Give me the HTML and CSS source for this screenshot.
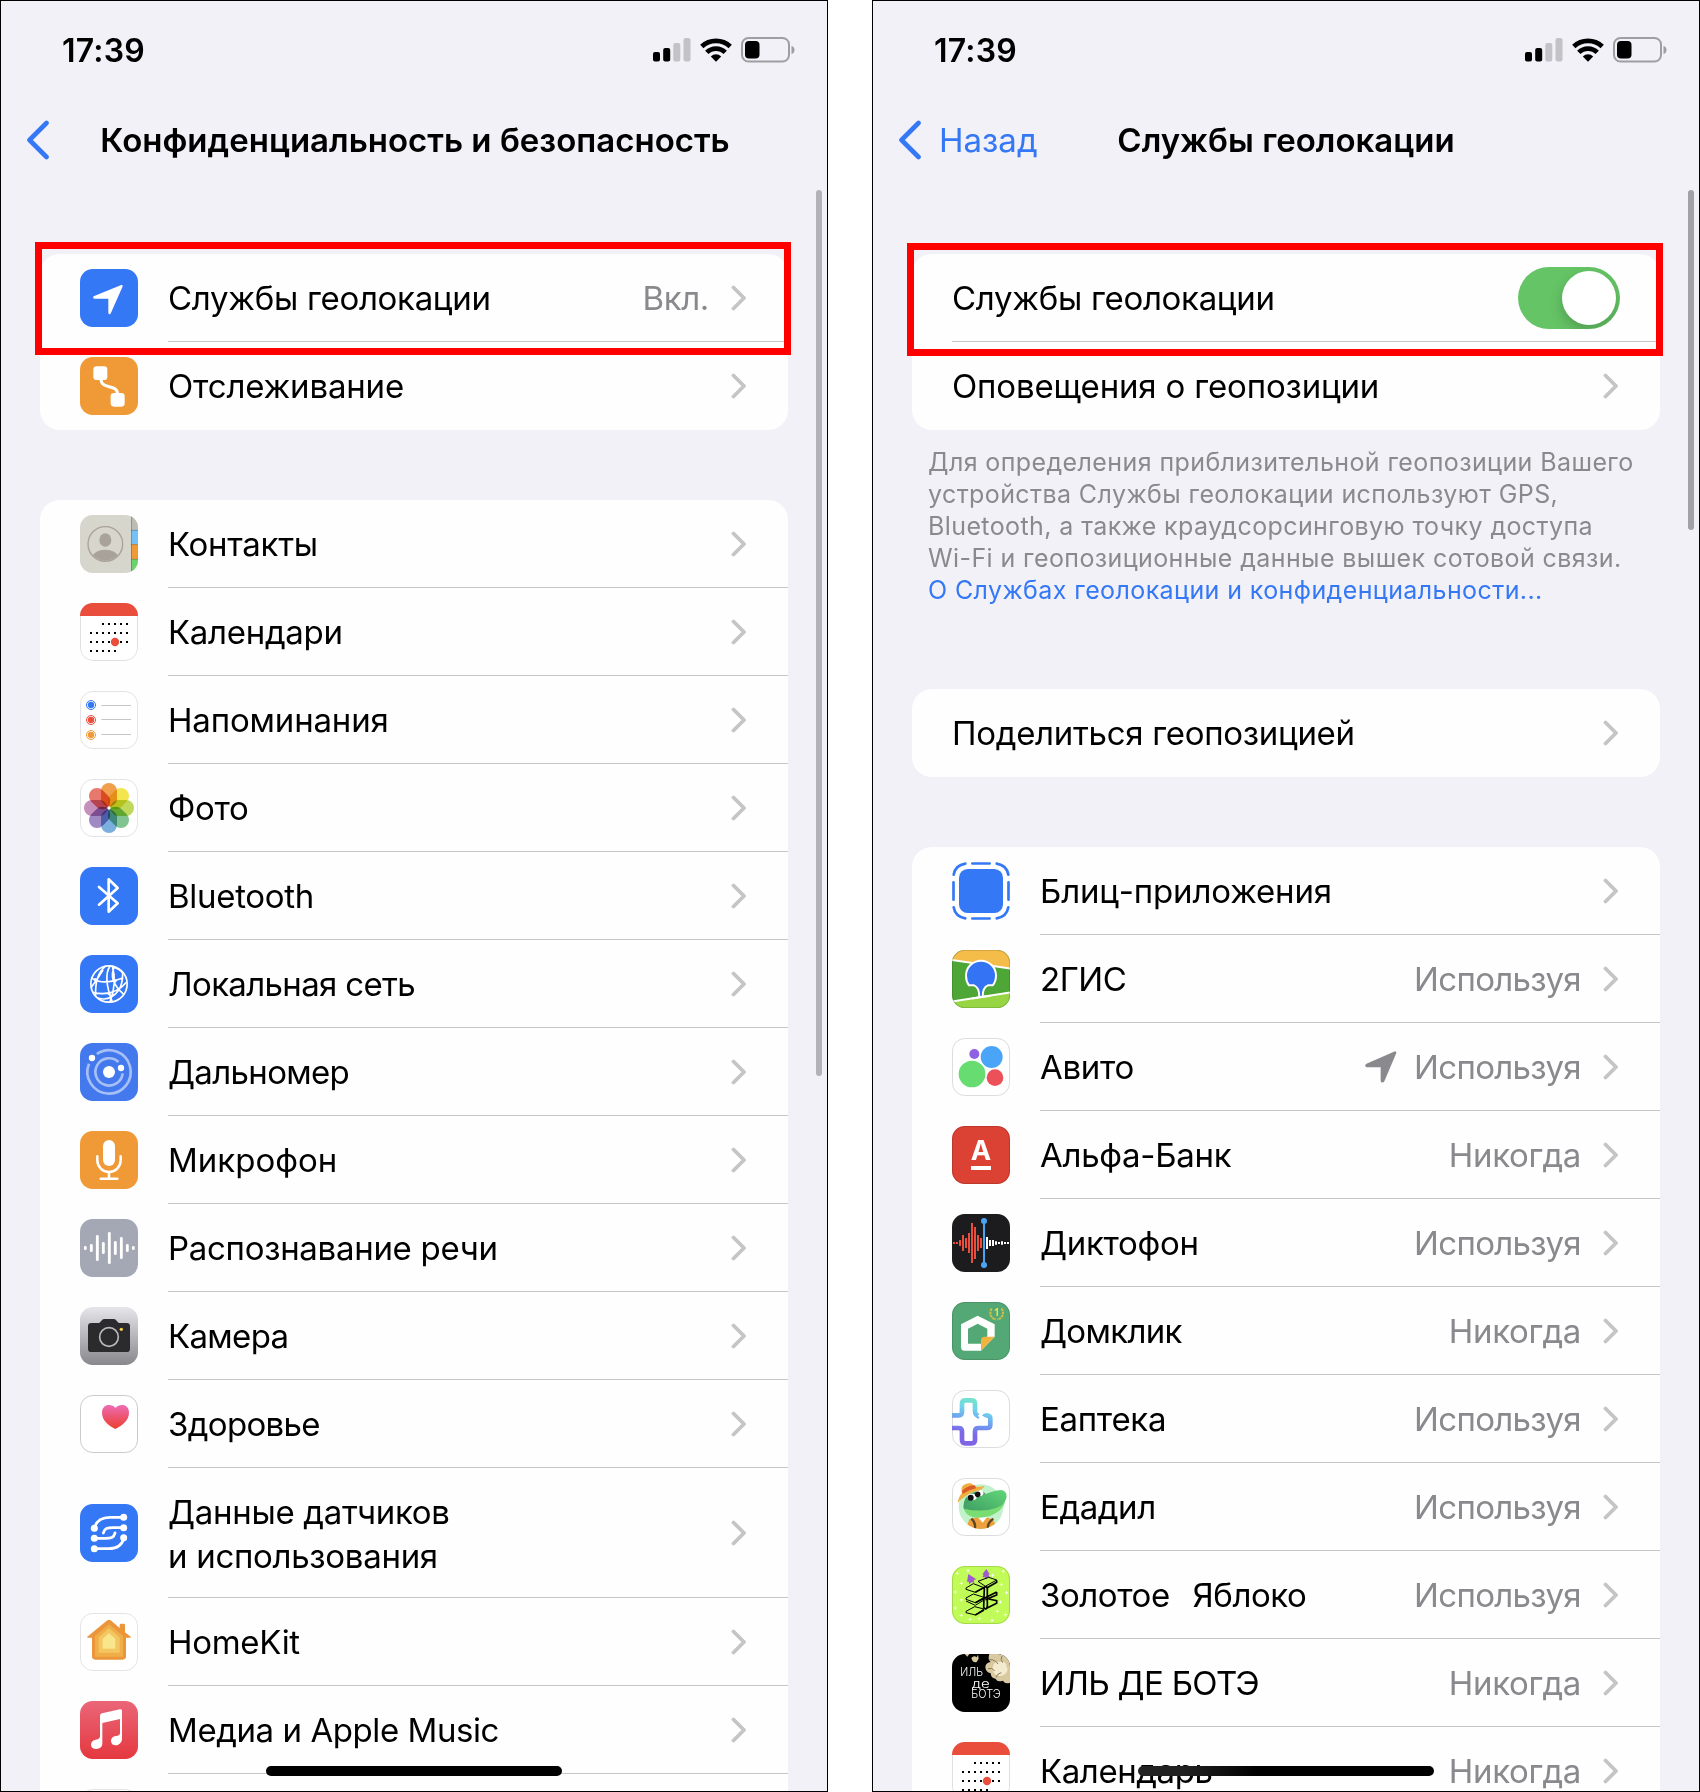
FILE: index.html
```html
<!DOCTYPE html>
<html lang="ru">
<head>
<meta charset="utf-8">
<title>Службы геолокации</title>
<link rel="stylesheet" href="styles.css">
</head>
<body>
<svg class="defs" width="0" height="0" aria-hidden="true">
  <defs>
    <linearGradient id="g-cam" x1="0" y1="0" x2="0" y2="1"><stop offset="0" stop-color="#e6e5ea"/><stop offset="1" stop-color="#88878c"/></linearGradient>
    <linearGradient id="g-heart" x1="0" y1="0" x2="0" y2="1"><stop offset="0" stop-color="#ee6bb4"/><stop offset="1" stop-color="#ec3f2c"/></linearGradient>
    <linearGradient id="g-music" x1="0" y1="0" x2="0" y2="1"><stop offset="0" stop-color="#ea6678"/><stop offset="1" stop-color="#e5383f"/></linearGradient>
    <linearGradient id="g-eap" gradientUnits="userSpaceOnUse" x1="90" y1="28" x2="60" y2="160"><stop offset="0" stop-color="#78e6c4"/><stop offset=".25" stop-color="#6fd4ec"/><stop offset=".55" stop-color="#6f9bf0"/><stop offset=".8" stop-color="#7c68ea"/><stop offset="1" stop-color="#8064e6"/></linearGradient>
    <linearGradient id="g-croc" x1="0" y1="1" x2="1" y2="0"><stop offset="0" stop-color="#3f9e64"/><stop offset="1" stop-color="#62d678"/></linearGradient>
    <clipPath id="clip-icon"><rect width="174" height="174" rx="38"/></clipPath>
    <clipPath id="clip-person"><circle cx="76" cy="87" r="50"/></clipPath>
    <clipPath id="clip-croc"><circle cx="86" cy="87" r="66"/></clipPath>
    <symbol id="chevron" viewBox="0 0 16 26"><path d="M2.5 2.5 13 13 2.5 23.5" fill="none" stroke="#c5c5c7" stroke-width="3.8" stroke-linecap="round" stroke-linejoin="round"/></symbol>
    <symbol id="back" viewBox="0 0 24 40"><path d="M20.5 3 3.5 20l17 17" fill="none" stroke="#3478f6" stroke-width="4.6" stroke-linecap="round" stroke-linejoin="round"/></symbol>
    <symbol id="signal" viewBox="0 0 38 24"><rect y="14" width="7" height="9.5" rx="2"/><rect x="10.2" y="10" width="7" height="13.5" rx="2"/><g fill="#c3c2c7"><rect x="20.3" y="5" width="7" height="18.5" rx="2"/><rect x="30.5" width="7" height="23.5" rx="2"/></g></symbol>
    <symbol id="wifi" viewBox="0 0 32 24"><g fill="none" stroke="#000" stroke-width="4.8"><path d="M1.8 8.600A20.5 20.5 0 0 1 30.2 8.600"/><path d="M6.800 14.400a13 13 0 0 1 18.400 0"/></g><path d="M10.8 18.4a7.5 7.5 0 0 1 10.4 0L16 23.8z"/></symbol>
    <symbol id="battery" viewBox="0 0 54 26"><rect x="1" y="1" width="47" height="23.5" rx="6.5" fill="none" stroke="#9f9ea3" stroke-width="2"/><rect x="4" y="4" width="14.5" height="17.5" rx="4"/><path d="M50.5 9v8c2-.6 3-2 3-4s-1-3.400-3-4z" fill="#9f9ea3"/></symbol>
    <symbol id="calendar" viewBox="0 0 174 174"><g clip-path="url(#clip-icon)"><path fill="#fff" d="M0 0h174v174H0z"/><rect x="1.500" y="1.500" width="171" height="171" rx="37" fill="none" stroke="#e0e0e2" stroke-width="3"/><path fill="#e94e3d" d="M0 0h174v39H0z"/></g><g stroke="#000" stroke-width="6" stroke-dasharray="6 12"><path d="M66 63h78"/><path d="M30 90h114"/><path d="M30 117h114"/><path d="M30 144h78"/></g><circle cx="105" cy="117" r="12.500" fill="#e94e3d"/></symbol>
    <path id="petal" d="M-24-51a24 24 0 0 1 48 0V-27Q24-16 12-8L0 0-12-8Q-24-16-24-27z"/>
    <path id="star" d="M0-7 1.500-1.500 7 0 1.500 1.500 0 7-1.500 1.500-7 0-1.500-1.500z"/>
  </defs>
</svg>

<main class="screens">
  <section class="phone">
    <header class="status"><span class="time">17:39</span><span class="indicators"><svg width="38" height="24"><use href="#signal"/></svg><svg width="32" height="24"><use href="#wifi"/></svg><svg width="54" height="26"><use href="#battery"/></svg></span></header>
    <nav class="navbar"><span class="back"><svg width="24" height="40"><use href="#back"/></svg></span><h1 class="title title-privacy">Конфиденциальность и безопасность</h1></nav>

    <ul class="card">
      <li class="row">
        <svg class="icon" viewBox="0 0 174 174"><rect width="174" height="174" rx="38" fill="#3478f6"/><path fill="#fff" stroke="#fff" stroke-width="6" stroke-linejoin="round" d="M125 51 90 131q-2 4-2-1V89q0-3-3-3H45q-5 0-1-2z"/></svg>
        <div class="body"><span class="label">Службы геолокации</span><span class="value">Вкл.</span><svg class="chevron"><use href="#chevron"/></svg></div>
        <span class="highlight"></span>
      </li>
      <li class="row">
        <svg class="icon" viewBox="0 0 174 174"><rect width="174" height="174" rx="38" fill="#f09a37"/><g fill="#fff"><rect x="40" y="28" width="42" height="41" rx="10"/><rect x="92" y="108" width="42" height="41" rx="10"/></g><path d="M63 66C63 100 112 78 113 112" fill="none" stroke="#fff" stroke-width="9"/></svg>
        <div class="body"><span class="label loose">Отслеживание</span><svg class="chevron"><use href="#chevron"/></svg></div>
      </li>
    </ul>

    <ul class="card card-data">
      <li class="row">
        <svg class="icon" viewBox="0 0 174 174"><g clip-path="url(#clip-icon)"><path fill="#d6d6cc" d="M0 0h174v174H0z"/><path fill="#bcbcb3" d="M153 0h21v45h-21z"/><path fill="#73c1f7" d="M153 45h21v43h-21z"/><path fill="#f09a37" d="M153 88h21v45h-21z"/><path fill="#6dd16c" d="M153 133h21v41h-21z"/><path d="M154.500 6v162M153 46h21M153 89h21M153 133h21" stroke="#000" stroke-opacity=".22" stroke-width="3"/></g><circle cx="76" cy="87" r="52" fill="none" stroke="#a8a29b" stroke-width="4"/><g fill="#a8a29b" clip-path="url(#clip-person)"><ellipse cx="76" cy="75" rx="18" ry="20.500"/><ellipse cx="76" cy="138" rx="44" ry="34"/></g></svg>
        <div class="body"><span class="label">Контакты</span><svg class="chevron"><use href="#chevron"/></svg></div>
      </li>
      <li class="row">
        <svg class="icon"><use href="#calendar"/></svg>
        <div class="body"><span class="label">Календари</span><svg class="chevron"><use href="#chevron"/></svg></div>
      </li>
      <li class="row">
        <svg class="icon" viewBox="0 0 174 174"><rect x="1.500" y="1.500" width="171" height="171" rx="37" fill="#fff" stroke="#e4e4e6" stroke-width="3"/><g fill="none" stroke-width="3"><circle cx="33" cy="42" r="13.500" stroke="#3478f6"/><circle cx="33" cy="87" r="13.500" stroke="#eb4e3d"/><circle cx="33" cy="132" r="13.500" stroke="#f09a37"/></g><circle cx="33" cy="42" r="9.500" fill="#3478f6"/><circle cx="33" cy="87" r="9.500" fill="#eb4e3d"/><circle cx="33" cy="132" r="9.500" fill="#f09a37"/><path d="M64 43.500h89M64 85.500h89M64 130.500h89" stroke="#c6c6c8" stroke-width="3"/></svg>
        <div class="body"><span class="label loose">Напоминания</span><svg class="chevron"><use href="#chevron"/></svg></div>
      </li>
      <li class="row">
        <svg class="icon photos" viewBox="0 0 174 174"><rect x="1.500" y="1.500" width="171" height="171" rx="37" fill="#fff" stroke="#e4e4e6" stroke-width="3"/><g transform="translate(87 87)"><use href="#petal" fill="#f0a04c"/><use href="#petal" fill="#f3e54e" transform="rotate(45)"/><use href="#petal" fill="#c0d95c" transform="rotate(90)"/><use href="#petal" fill="#82c490" transform="rotate(135)"/><use href="#petal" fill="#7bb0de" transform="rotate(180)"/><use href="#petal" fill="#9f8ac4" transform="rotate(225)"/><use href="#petal" fill="#c690bd" transform="rotate(270)"/><use href="#petal" fill="#e9786c" transform="rotate(315)"/></g><circle cx="87" cy="87" r="5" fill="#fff"/></svg>
        <div class="body"><span class="label">Фото</span><svg class="chevron"><use href="#chevron"/></svg></div>
      </li>
      <li class="row">
        <svg class="icon" viewBox="0 0 174 174"><rect width="174" height="174" rx="38" fill="#3478f6"/><path d="M57 60l56 49-27 25V37l27 26-56 50" fill="none" stroke="#fff" stroke-width="8" stroke-linecap="round" stroke-linejoin="round"/></svg>
        <div class="body"><span class="label">Bluetooth</span><svg class="chevron"><use href="#chevron"/></svg></div>
      </li>
      <li class="row">
        <svg class="icon" viewBox="0 0 174 174"><rect width="174" height="174" rx="38" fill="#3478f6"/><g fill="none" stroke="#fff" stroke-width="5"><circle cx="87" cy="87" r="54.500"/><path d="M76 34Q44 60 47 122M90 33Q68 66 97 141M104 34Q82 74 131 118M92 33Q124 44 128 55M36 70Q70 92 130 68M33 98Q50 76 69 45M38 112Q100 128 141 80M54 129Q90 141 116 106Q128 88 128 55M97 33Q112 84 90 140"/></g><g fill="#fff"><circle cx="46" cy="74" r="5"/><circle cx="105" cy="78" r="5"/><circle cx="88" cy="116" r="5"/></g></svg>
        <div class="body"><span class="label tight">Локальная сеть</span><svg class="chevron"><use href="#chevron"/></svg></div>
      </li>
      <li class="row">
        <svg class="icon" viewBox="0 0 174 174"><rect width="174" height="174" rx="38" fill="#4479ee"/><g fill="none" stroke="#a6c0f7" stroke-width="8"><path d="M50.500 33A65 65 0 1 1 27 62"/><path d="M115.500 57A41 41 0 1 0 128 91"/></g><g fill="#fff"><circle cx="87" cy="87" r="18"/><circle cx="36" cy="45" r="9.500"/><circle cx="123" cy="75" r="9.500"/></g></svg>
        <div class="body"><span class="label tight">Дальномер</span><svg class="chevron"><use href="#chevron"/></svg></div>
      </li>
      <li class="row">
        <svg class="icon" viewBox="0 0 174 174"><rect width="174" height="174" rx="38" fill="#f09a37"/><rect x="69" y="27" width="36" height="78" rx="18" fill="#fff"/><path d="M52 76v12a35 35 0 0 0 70 0V76M87 123v20M62 143h50" fill="none" stroke="#fff" stroke-width="7.500" stroke-linecap="round"/></svg>
        <div class="body"><span class="label natural">Микрофон</span><svg class="chevron"><use href="#chevron"/></svg></div>
      </li>
      <li class="row">
        <svg class="icon" viewBox="0 0 174 174"><rect width="174" height="174" rx="38" fill="#a3a8b4"/><path d="M16 85v4M34 79v16M52 52v70M70 73v28M88 43v88M106 70v34M124 58v58M142 79v16M160 85v4" stroke="#fff" stroke-width="8.500" stroke-linecap="round"/></svg>
        <div class="body"><span class="label">Распознавание речи</span><svg class="chevron"><use href="#chevron"/></svg></div>
      </li>
      <li class="row">
        <svg class="icon" viewBox="0 0 174 174"><rect width="174" height="174" rx="38" fill="url(#g-cam)"/><path fill="#2b2b2d" d="M34 48h22q4 0 7-5 4-7 10-7h28q6 0 10 7 3 5 7 5h22q10 0 10 10v67q0 10-10 10H34q-10 0-10-10V58q0-10 10-10z"/><circle cx="87" cy="90" r="28" fill="#2b2b2d" stroke="#b9b9bc" stroke-width="5"/><circle cx="124" cy="67" r="5" fill="#f7ce46"/></svg>
        <div class="body"><span class="label tight">Камера</span><svg class="chevron"><use href="#chevron"/></svg></div>
      </li>
      <li class="row">
        <svg class="icon" viewBox="0 0 174 174"><rect x="1.500" y="1.500" width="171" height="171" rx="37" fill="#fff" stroke="#cbcbcd" stroke-width="3"/><path fill="url(#g-heart)" d="M106 102C84 90 66 76 66 53 66 38 76 30 87 30c8 0 15 3 19.500 9C111 33 118 30 126 30c12 0 21 8 21 23 0 23-19 37-41 49z"/></svg>
        <div class="body"><span class="label tight">Здоровье</span><svg class="chevron"><use href="#chevron"/></svg></div>
      </li>
      <li class="row row-tall">
        <svg class="icon" viewBox="0 0 174 174"><rect width="174" height="174" rx="38" fill="#3478f6"/><g fill="none" stroke="#fff" stroke-width="8.500" stroke-linecap="round"><path d="M43 73C50 44 76 40 90 40h42"/><path d="M43 103h32c18 0 27-2 30-16"/><path d="M132 71h-32c-18 0-27 2-30 16"/><path d="M43 134h44c14 0 38-4 45-33"/></g><g fill="#fff"><circle cx="131" cy="40" r="10.500"/><circle cx="131" cy="71" r="10.500"/><circle cx="131" cy="101" r="10.500"/><circle cx="43" cy="73" r="10.500"/><circle cx="43" cy="103" r="10.500"/><circle cx="43" cy="134" r="10.500"/></g></svg>
        <div class="body"><span class="label">Данные датчиков<br>и использования</span><svg class="chevron"><use href="#chevron"/></svg></div>
      </li>
      <li class="row">
        <svg class="icon" viewBox="0 0 174 174"><rect x="1.500" y="1.500" width="171" height="171" rx="37" fill="#fff" stroke="#e4e4e6" stroke-width="3"/><path fill="#eb963b" d="M82 22q5-4 10 0l27 23V36q0-4 4-4h8q4 0 4 4v22l18 14q0 2-3 2h-12v56q0 10-10 10H46q-10 0-10-10V74H24q-3 0-3-2z"/><path fill="#f0ae49" d="M87 34l42 35v62H45V69z"/><path fill="#f4c661" d="M87 46l32 27v46H56V73z"/><path fill="#f9e58b" d="M87 60l19 17v30H68V77z"/></svg>
        <div class="body"><span class="label">HomeKit</span><svg class="chevron"><use href="#chevron"/></svg></div>
      </li>
      <li class="row">
        <svg class="icon" viewBox="0 0 174 174"><rect width="174" height="174" rx="38" fill="url(#g-music)"/><path fill="#fff" d="M66 37l54-12q6-1 6 4v84c0 12-10 20-19 20-8 0-14-5-14-13 0-9 6-14 14-15 9-1 13-3 13-9V54L67 66v61c0 11-8 17-17 17-11 0-17-5-17-13 0-9 7-14 14-15 9-1 13-4 13-10V45q0-7 6-8z"/></svg>
        <div class="body"><span class="label snug">Медиа и Apple Music</span><svg class="chevron"><use href="#chevron"/></svg></div>
      </li>
      <li class="row">
        <svg class="icon" viewBox="0 0 174 174"><rect x="1.500" y="1.500" width="171" height="171" rx="37" fill="#fff" stroke="#e4e4e6" stroke-width="3"/></svg>
      </li>
    </ul>
    <i class="scrollbar scrollbar-long"></i>
    <i class="home"></i>
  </section>

  <section class="phone">
    <header class="status"><span class="time">17:39</span><span class="indicators"><svg width="38" height="24"><use href="#signal"/></svg><svg width="32" height="24"><use href="#wifi"/></svg><svg width="54" height="26"><use href="#battery"/></svg></span></header>
    <nav class="navbar"><span class="back"><svg width="24" height="40"><use href="#back"/></svg>Назад</span><h1 class="title">Службы геолокации</h1></nav>

    <ul class="card">
      <li class="row">
        <div class="body"><span class="label">Службы геолокации</span><span class="toggle"></span></div>
        <span class="highlight highlight-low"></span>
      </li>
      <li class="row">
        <div class="body"><span class="label loose">Оповещения о геопозиции</span><svg class="chevron"><use href="#chevron"/></svg></div>
      </li>
    </ul>
    <p class="footnote">Для определения приблизительной геопозиции Вашего<br>устройства Службы геолокации используют GPS,<br>Bluetooth, а также краудсорсинговую точку доступа<br>Wi-Fi и геопозиционные данные вышек сотовой связи.<br><a class="link">О Службах геолокации и конфиденциальности...</a></p>

    <ul class="card card-share">
      <li class="row">
        <div class="body"><span class="label">Поделиться геопозицией</span><svg class="chevron"><use href="#chevron"/></svg></div>
      </li>
    </ul>

    <ul class="card card-apps">
      <li class="row">
        <svg class="icon" viewBox="0 0 174 174"><rect x="21" y="21" width="132" height="132" rx="26" fill="#3478f6"/><g fill="none" stroke="#3478f6" stroke-width="8" stroke-linecap="round"><path d="M61 4.500h52M61 169.500h52M4.500 61v52M169.500 61v52"/><path d="M40 5C20 8 8 20 5 38M134 5c20 3 32 15 35 33M40 169c-20-3-32-15-35-33M134 169c20-3 32-15 35-33"/></g></svg>
        <div class="body"><span class="label loose">Блиц-приложения</span><svg class="chevron"><use href="#chevron"/></svg></div>
      </li>
      <li class="row">
        <svg class="icon" viewBox="0 0 174 174"><g clip-path="url(#clip-icon)"><path fill="#4ea637" d="M0 0h174v174H0z"/><path fill="#f4bc49" d="M0 0h174v56L0 30z"/><path fill="#97d544" d="M0 155l174-27v46H0z"/><path d="M-2 30l178 26M-2 155l178-28" stroke="#fff" stroke-width="6"/><path fill="#3473f4" stroke="#fff" stroke-width="6" d="M82 141Q82 112 66 106H51Q42 94 42 77a45 45 0 0 1 90 0q0 17-10 29h-14Q92 112 92 140z"/><path fill="#97d544" d="M70 147.500l40-6v8H70z"/><path d="M60 145.500l55-8.500" stroke="#fff" stroke-width="6"/><rect x="1" y="1" width="172" height="172" rx="37" fill="none" stroke="#000" stroke-opacity=".15" stroke-width="3"/></g></svg>
        <div class="body"><span class="label snug">2ГИС</span><span class="value tight">Используя</span><svg class="chevron"><use href="#chevron"/></svg></div>
      </li>
      <li class="row">
        <svg class="icon" viewBox="0 0 174 174"><rect x="1.500" y="1.500" width="171" height="171" rx="37" fill="#fff" stroke="#dcdcde" stroke-width="3"/><circle cx="67" cy="48" r="15" fill="#8e62e2"/><circle cx="119" cy="57" r="33" fill="#4aa5f8"/><circle cx="60" cy="108" r="40" fill="#67dd71"/><circle cx="129" cy="119" r="25" fill="#ec5059"/></svg>
        <div class="body"><span class="label">Авито</span><svg class="arrow" width="32" height="32" viewBox="0 0 96 96"><path fill="#8a8a8e" stroke="#8a8a8e" stroke-width="8" stroke-linejoin="round" d="M90 5 54 90q-3 2-3-1V48q0-3-3-3H6q-3-1 0-3z"/></svg><span class="value tight">Используя</span><svg class="chevron"><use href="#chevron"/></svg></div>
      </li>
      <li class="row">
        <svg class="icon" viewBox="0 0 174 174"><rect width="174" height="174" rx="38" fill="#dc4233"/><rect x="1.500" y="1.500" width="171" height="171" rx="37" fill="none" stroke="#000" stroke-opacity=".15" stroke-width="3"/><text x="87" y="102" class="alfa">A</text><path fill="#fff" d="M57 120h60v12H57z"/></svg>
        <div class="body"><span class="label">Альфа-Банк</span><span class="value">Никогда</span><svg class="chevron"><use href="#chevron"/></svg></div>
      </li>
      <li class="row">
        <svg class="icon" viewBox="0 0 174 174"><rect width="174" height="174" rx="38" fill="#1c1c1e"/><path stroke="#ea4e3d" stroke-width="6" d="M6 84v6M15 84v6M24 78v18M33 63v48M42 72v30M51 57v60M60 27v120M69 39v96M78 63v48M87 72v30"/><path stroke="#fff" stroke-width="6" d="M105 69v36M114 78v18M123 78v18M132 82v10M141 84v6M150 82v10M159 84v6M168 84v6"/><path stroke="#4aa4f5" stroke-width="6" d="M96 21v132"/><circle cx="96" cy="21" r="9" fill="#4aa4f5"/><circle cx="96" cy="153" r="9" fill="#4aa4f5"/></svg>
        <div class="body"><span class="label">Диктофон</span><span class="value tight">Используя</span><svg class="chevron"><use href="#chevron"/></svg></div>
      </li>
      <li class="row">
        <svg class="icon" viewBox="0 0 174 174"><rect width="174" height="174" rx="38" fill="#54a876"/><rect x="1.500" y="1.500" width="171" height="171" rx="37" fill="none" stroke="#000" stroke-opacity=".12" stroke-width="3"/><path fill="#fff" fill-rule="evenodd" d="M77 41 128 67V104L87 146H38Q27 146 27 135V67zM77 65 48 80v45h39l19-22V80z"/><path fill="#f2b440" d="M128 104 87 146v-31q0-11 11-11z"/><g fill="none" stroke="#cfc043" stroke-width="6" stroke-dasharray="8 2"><path d="M119 19q-9 18 2 28 5 5 11 5M149 19q9 18-2 28-5 5-11 5"/></g><text x="134" y="41" class="medal">1</text></svg>
        <div class="body"><span class="label tight">Домклик</span><span class="value">Никогда</span><svg class="chevron"><use href="#chevron"/></svg></div>
      </li>
      <li class="row">
        <svg class="icon" viewBox="0 0 174 174"><rect x="1.500" y="1.500" width="171" height="171" rx="37" fill="#fff" stroke="#dcdcde" stroke-width="3"/><path fill="none" stroke="url(#g-eap)" stroke-width="14" d="M0 76h20q10 0 10-10V41q0-10 10-10h19q10 0 10 10v23q0 8 6 12l8 5M96 80q2-4 8-4 11 0 11 11v17q0 10-10 10H79q-10 0-10 10v26q0 10-10 10H40q-10 0-10-10v-26q0-10-10-10H0"/><path d="M80 80l12-12" stroke="#fff" stroke-width="7"/></svg>
        <div class="body"><span class="label">Еаптека</span><span class="value tight">Используя</span><svg class="chevron"><use href="#chevron"/></svg></div>
      </li>
      <li class="row">
        <svg class="icon" viewBox="0 0 174 174"><rect x="1.500" y="1.500" width="171" height="171" rx="37" fill="#fff" stroke="#dcdcde" stroke-width="3"/><circle cx="87" cy="86" r="67" fill="#c2f2cb"/><g clip-path="url(#clip-croc)"><path fill="#eda03c" d="M40 160l12-36q20-8 35-8t35 8l20 36z"/><path fill="#fff" d="M76 116h30l-14 18z"/><path d="M58 122q15 12 10 34M124 122q-19 12-16 34" fill="none" stroke="#5e4526" stroke-width="7"/></g><path fill="#46a267" d="M34 88Q34 56 58 46q24-16 42 0L84 110q-46 2-50-22z"/><path fill="#79dd72" d="M36 90q60 20 124-28 0 32-46 52-26 8-48 4-28-6-30-28z"/><path fill="url(#g-croc)" d="M36 92q8-22 52-38 34-16 60-18 16 2 16 20-4 24-32 34-40 14-96 2z"/><g fill="#fff"><ellipse cx="60" cy="57" rx="14" ry="10"/><ellipse cx="82" cy="46" rx="12" ry="9"/></g><g fill="#111"><circle cx="56" cy="59" r="9"/><circle cx="77" cy="49" r="8.500"/></g><path fill="#efae3e" d="M17 74q3-18 13-28-4-18 4-24 10-8 22-6 8 2 12 10 14 2 29-3-2 12-28 17Q44 48 17 74z"/><path fill="#dc5b2c" d="M30 38q18-16 39-16l3 9Q52 34 32 48z"/></svg>
        <div class="body"><span class="label snug">Едадил</span><span class="value tight">Используя</span><svg class="chevron"><use href="#chevron"/></svg></div>
      </li>
      <li class="row">
        <svg class="icon" viewBox="0 0 174 174"><rect width="174" height="174" rx="38" fill="#c0fb57"/><rect x="1.500" y="1.500" width="171" height="171" rx="37" fill="none" stroke="#000" stroke-opacity=".14" stroke-width="3"/><g fill="#fff"><use href="#star" x="16" y="22"/><use href="#star" x="48" y="14"/><use href="#star" x="28" y="52"/><use href="#star" x="10" y="78"/><use href="#star" x="28" y="102"/><use href="#star" x="10" y="126"/><use href="#star" x="28" y="148"/><use href="#star" x="54" y="160"/><use href="#star" x="82" y="158"/><use href="#star" x="120" y="163"/><use href="#star" x="160" y="146"/><use href="#star" x="136" y="136"/><use href="#star" x="145" y="108"/><use href="#star" x="164" y="80"/><use href="#star" x="148" y="56"/><use href="#star" x="154" y="16"/><use href="#star" x="122" y="28"/></g><path fill="#a05ccc" d="M49 24l24 16-8 2 2 8-9-1-6 6-2-8h-5zM103 9l10 16-4 1 4 8h-9v5h-5v-5h-8l4-8-4-1z"/><g fill="none" stroke="#000" stroke-width="3" stroke-linejoin="round"><path d="M42 66l22-13 32 12-26 14-28-9zM78 46l32-12 24 8-34 19zM42 96l22-12 32 10-26 16-28-10zM42 105l28 13 26-16M42 136l26-14 28 7-26 18-28-7z"/></g><g fill="none" stroke="#000" stroke-width="5"><path d="M70 79l30-17M104 66l30-17v-6M70 110l64-32M134 78v9l-34 14M70 147l26-15M104 127l30-15v-8l-24-5M97 64l-2 60 5 6M100 61q8 2 6 12v46q0 10-8 10"/></g></svg>
        <div class="body"><span class="label snug wide-gap">Золотое&nbsp; Яблоко</span><span class="value tight">Используя</span><svg class="chevron"><use href="#chevron"/></svg></div>
      </li>
      <li class="row">
        <svg class="icon" viewBox="0 0 174 174"><g clip-path="url(#clip-icon)"><path d="M0 0h174v174H0z"/><path fill="#d8c9a0" d="M112 0h62v86q-12 6-22-6-14 6-22-6-14-2-14-16-16-4-16-20 2-12 16-14-10-8-4-24zM58 12q8-10 16-2l4-8 2 12-6 10q-12 4-16-12zM38 0h14l-6 8z"/><path fill="#f3ead0" d="M122 40q4-20 22-16 18-4 20 14 8 14-8 24-18 10-30-4-6-8-4-18z"/><path d="M112 16q20 2 26 14M150 6q-6 10 2 20M108 44q12-4 20 6M132 70q4-12 16-14" fill="none" stroke="#8a7b52" stroke-width="3"/></g><g class="beaute"><text x="25" y="67" font-size="33" textLength="68" lengthAdjust="spacingAndGlyphs">ИЛЬ</text><text x="59" y="101" font-size="33" textLength="54" lengthAdjust="spacingAndGlyphs">де</text><text x="58" y="132" font-size="33" textLength="88" lengthAdjust="spacingAndGlyphs">БОТЭ</text></g></svg>
        <div class="body"><span class="label tight">ИЛЬ ДЕ БОТЭ</span><span class="value">Никогда</span><svg class="chevron"><use href="#chevron"/></svg></div>
      </li>
      <li class="row">
        <svg class="icon"><use href="#calendar"/></svg>
        <div class="body"><span class="label snug">Календарь</span><span class="value">Никогда</span><svg class="chevron"><use href="#chevron"/></svg></div>
      </li>
    </ul>
    <i class="scrollbar scrollbar-short"></i>
    <i class="home home-shaded"></i>
  </section>
</main>
</body>
</html>
```
FILE: styles.css
```css
* { box-sizing: border-box; }

body {
  margin: 0;
  background: #fff;
  color: #000;
  font-family: Inter, "Liberation Sans", sans-serif;
  font-size: 33px;
  line-height: 44px;
}

.defs { position: absolute; }

.screens {
  display: flex;
  justify-content: space-between;
  width: 1700px;
  height: 1792px;
  overflow: hidden;
}

.phone {
  position: relative;
  display: flex;
  flex-direction: column;
  width: 828px;
  height: 1792px;
  padding: 0 39px;
  overflow: hidden;
  border: 1px solid #000;
  background: #f2f1f7;
}

.status {
  flex: none;
  display: flex;
  justify-content: space-between;
  align-items: center;
  height: 97px;
  margin: 0 -7px 0 22px;
}

.time {
  padding-top: 2px;
  font-size: 32px;
  font-weight: 600;
  letter-spacing: .2px;
}

.indicators {
  display: flex;
  align-items: center;
  gap: 9px;
}

.navbar {
  flex: none;
  display: grid;
  grid-template-columns: 1fr auto 1fr;
  align-items: center;
  height: 84px;
  margin: 0 -14px;
}

.back {
  display: flex;
  align-items: center;
  gap: 17px;
  width: 0;
  white-space: nowrap;
  color: #3478f6;
}

.back svg { flex: none; }

.title {
  grid-column: 2;
  margin: 0;
  font-size: 33px;
  font-weight: 600;
  white-space: nowrap;
}

.title-privacy { padding-left: 2px; }

.card {
  flex: none;
  margin: 0;
  padding: 0;
  list-style: none;
  background: #fefefe;
  border-radius: 20px;
}

.navbar + .card { margin-top: 72px; }
.card-data { margin-top: 70px; }
.card-share { margin-top: 83px; }
.card-apps { margin-top: 70px; }

.row {
  position: relative;
  display: flex;
  align-items: center;
  gap: 30px;
  height: 88px;
  padding-left: 40px;
}

.row-tall { height: 130px; }
.row-tall .label { padding-top: 2px; }

.icon {
  flex: none;
  width: 58px;
  height: 58px;
}

.photos use { mix-blend-mode: multiply; }

.body {
  flex: 1;
  align-self: stretch;
  display: flex;
  align-items: center;
  padding-right: 41px;
  box-shadow: inset 0 -1px #c6c6c8;
}

.row:last-child .body { box-shadow: none; }

.label {
  flex: 1;
  white-space: nowrap;
  letter-spacing: -.3px;
}

.value {
  color: #8a8a8e;
  letter-spacing: -.35px;
}

/* Tracking steps for the row texts */
.natural { letter-spacing: 0; }
.loose { letter-spacing: -.17px; }
.snug { letter-spacing: -.43px; }
.tight { letter-spacing: -.67px; }
.wide-gap { word-spacing: 2.5px; }

.arrow { margin-right: 17px; }

.chevron {
  flex: none;
  width: 16px;
  height: 26px;
  margin-left: 22px;
}

.toggle {
  display: flex;
  justify-content: flex-end;
  width: 102px;
  height: 62px;
  margin-right: -1px;
  padding: 4px;
  overflow: hidden;
  border-radius: 31px;
  background: #65c466;
}

.toggle::before {
  content: "";
  width: 54px;
  border-radius: 50%;
  background: #fff;
  box-shadow: 0 6px 14px rgba(0, 0, 0, .2);
}

.highlight {
  position: absolute;
  top: -12px;
  left: -5px;
  z-index: 1;
  width: 756px;
  height: 113px;
  border: 7px solid #fe0000;
}

.highlight-low { top: -11px; }

.footnote {
  flex: none;
  margin: 16px 0 0 16px;
  font-size: 25px;
  line-height: 32px;
  letter-spacing: .4px;
  white-space: nowrap;
  color: #8a8a8e;
}

.link { color: #3478f6; }

.scrollbar {
  position: absolute;
  top: 189px;
  right: 5px;
  width: 6px;
  border-radius: 3px;
  background: #b3b2b7;
}

.scrollbar-long { height: 886px; }

.scrollbar-short {
  height: 340px;
  background: #a2a1a6;
}

.home {
  position: absolute;
  left: 265px;
  bottom: 15px;
  width: 296px;
  height: 10px;
  border-radius: 5px;
  background: #000;
}

.home-shaded { background: linear-gradient(90deg, #222 15%, #000 40%); }

.alfa {
  fill: #fff;
  font-size: 82px;
  font-weight: 700;
  text-anchor: middle;
}

.medal {
  fill: #ecdf45;
  font-family: "Noto Sans", sans-serif;
  font-size: 29px;
  font-weight: 700;
  text-anchor: middle;
}

.beaute {
  fill: #fff;
  font-family: Inter, sans-serif;
  font-weight: 300;
}
```
